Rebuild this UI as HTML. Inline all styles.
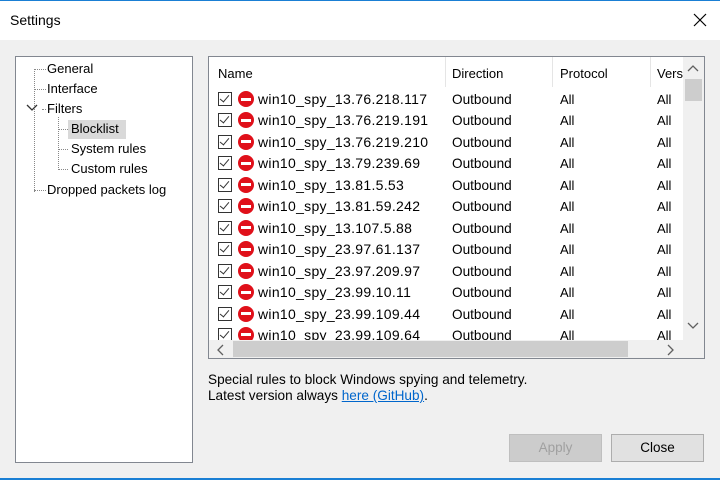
<!DOCTYPE html>
<html><head><meta charset="utf-8"><style>
*{margin:0;padding:0;box-sizing:border-box}
body{width:720px;height:480px;overflow:hidden;background:#f0f0f0;font-family:"Liberation Sans",sans-serif;font-size:13px;color:#000;position:relative}
.abs{position:absolute}
#title{left:0;top:0;width:720px;height:40px;background:#fff;border-top:1px solid #1a7fd4}
#title span{position:absolute;left:10px;top:11px;font-size:14px}
#tree{left:15px;top:56px;width:178px;height:407px;background:#fff;border:1px solid #828790}
#list{left:208px;top:56px;width:497px;height:303px;background:#fff;border:1px solid #828790;overflow:hidden}
.t{position:absolute;white-space:nowrap}
.row{position:absolute;left:0;height:21px;width:474px}
.cb{position:absolute;left:9px;top:3px;width:14px;height:14px;border:1px solid #333;background:#fff}
.cb:after{content:"";position:absolute;left:3px;top:0px;width:4px;height:8px;border-right:1.5px solid #333;border-bottom:1.5px solid #333;transform:rotate(40deg)}
.ic{position:absolute;left:29px;top:2px;width:16px;height:16px;border-radius:50%;background:#e0101a}
.ic:after{content:"";position:absolute;left:3px;top:6.5px;width:10px;height:3px;background:#fff}
.dot{position:absolute;border-left:1px dotted #888}
.doth{position:absolute;border-top:1px dotted #888}
.btn{position:absolute;top:434px;width:93px;height:28px;border:1px solid #adadad;background:#e1e1e1;text-align:center;line-height:26px;font-size:13.5px}
.nm{font-size:14px;letter-spacing:0.3px}
</style></head><body>
<div id="title" class="abs"><span>Settings</span>
<svg class="abs" style="left:693px;top:12px" width="14" height="14"><path d="M1 1L13 13M13 1L1 13" stroke="#000" stroke-width="1.2"/></svg></div>
<div class="abs" style="left:0;top:478px;width:720px;height:2px;background:#1a7fd4"></div>
<div id="tree" class="abs">
<div class="dot" style="left:18px;top:12px;height:123px"></div>
<div class="doth" style="left:18px;top:12px;width:12px"></div>
<div class="doth" style="left:18px;top:32px;width:12px"></div>
<div class="doth" style="left:26px;top:52px;width:4px"></div>
<div class="doth" style="left:18px;top:133px;width:12px"></div>
<div class="dot" style="left:42px;top:60px;height:53px"></div>
<div class="doth" style="left:42px;top:72px;width:10px"></div>
<div class="doth" style="left:42px;top:92px;width:10px"></div>
<div class="doth" style="left:42px;top:112px;width:10px"></div>
<svg class="abs" style="left:10px;top:47px" width="12" height="8"><path d="M1 1L6 6L11 1" stroke="#333" stroke-width="1.3" fill="none"/></svg>
<div class="t" style="left:31px;top:4px">General</div>
<div class="t" style="left:31px;top:24px">Interface</div>
<div class="t" style="left:31px;top:44px">Filters</div>
<div class="abs" style="left:52px;top:63px;width:58px;height:19px;background:#d9d9d9"></div>
<div class="t" style="left:55px;top:64px">Blocklist</div>
<div class="t" style="left:55px;top:84px">System rules</div>
<div class="t" style="left:55px;top:104px">Custom rules</div>
<div class="t" style="left:31px;top:125px">Dropped packets log</div>
</div>
<div id="list" class="abs">
<div class="t" style="left:9px;top:9px">Name</div>
<div class="abs" style="left:236px;top:0;width:1px;height:30px;background:#e5e5e5"></div>
<div class="t" style="left:243px;top:9px">Direction</div>
<div class="abs" style="left:343px;top:0;width:1px;height:30px;background:#e5e5e5"></div>
<div class="t" style="left:351px;top:9px">Protocol</div>
<div class="abs" style="left:441px;top:0;width:1px;height:30px;background:#e5e5e5"></div>
<div class="t" style="left:448px;top:9px">Vers</div>
<div id="rows"></div>
<div class="abs" style="left:474px;top:0;width:21px;height:283px;background:#f0f0f0"></div>
<div class="abs" style="left:476px;top:22px;width:17px;height:22px;background:#cdcdcd"></div>
<svg class="abs" style="left:478px;top:8px" width="12" height="8"><path d="M1 6L6 1L11 6" stroke="#606060" stroke-width="1.3" fill="none"/></svg>
<svg class="abs" style="left:478px;top:265px" width="12" height="8"><path d="M1 1L6 6L11 1" stroke="#606060" stroke-width="1.3" fill="none"/></svg>
<div class="abs" style="left:0;top:283px;width:474px;height:18px;background:#f0f0f0"></div>
<div class="abs" style="left:24px;top:284px;width:395px;height:16px;background:#cdcdcd"></div>
<svg class="abs" style="left:8px;top:287px" width="8" height="12"><path d="M6 1L1 6L6 11" stroke="#606060" stroke-width="1.3" fill="none"/></svg>
<svg class="abs" style="left:458px;top:287px" width="8" height="12"><path d="M1 1L6 6L1 11" stroke="#606060" stroke-width="1.3" fill="none"/></svg>
<div class="abs" style="left:474px;top:283px;width:21px;height:18px;background:#f0f0f0"></div>
</div>
<div class="t" style="left:208px;top:372px;font-size:13.6px">Special rules to block Windows spying and telemetry.</div>
<div class="t" style="left:208px;top:388px;font-size:13.6px">Latest version always <span style="color:#0066cc;text-decoration:underline">here (GitHub)</span>.</div>
<div class="btn" style="left:509px;color:#a0a0a0;border-color:#bfbfbf;background:#cccccc">Apply</div>
<div class="btn" style="left:611px">Close</div>
<script>
var n=["13.76.218.117","13.76.219.191","13.76.219.210","13.79.239.69","13.81.5.53","13.81.59.242","13.107.5.88","23.97.61.137","23.97.209.97","23.99.10.11","23.99.109.44","23.99.109.64"];
var h="";
n.forEach(function(s,i){var y=32+i*21.45;
h+='<div class="row" style="top:'+y+'px"><div class="cb"></div><div class="ic"></div><div class="t nm" style="left:49px;top:2px">win10_spy_'+s+'</div><div class="t" style="left:243px;top:3px;font-size:13.6px">Outbound</div><div class="t" style="left:351px;top:3px">All</div><div class="t" style="left:448px;top:3px">All</div></div>';});
document.getElementById("rows").innerHTML=h;
</script>
</body></html>
